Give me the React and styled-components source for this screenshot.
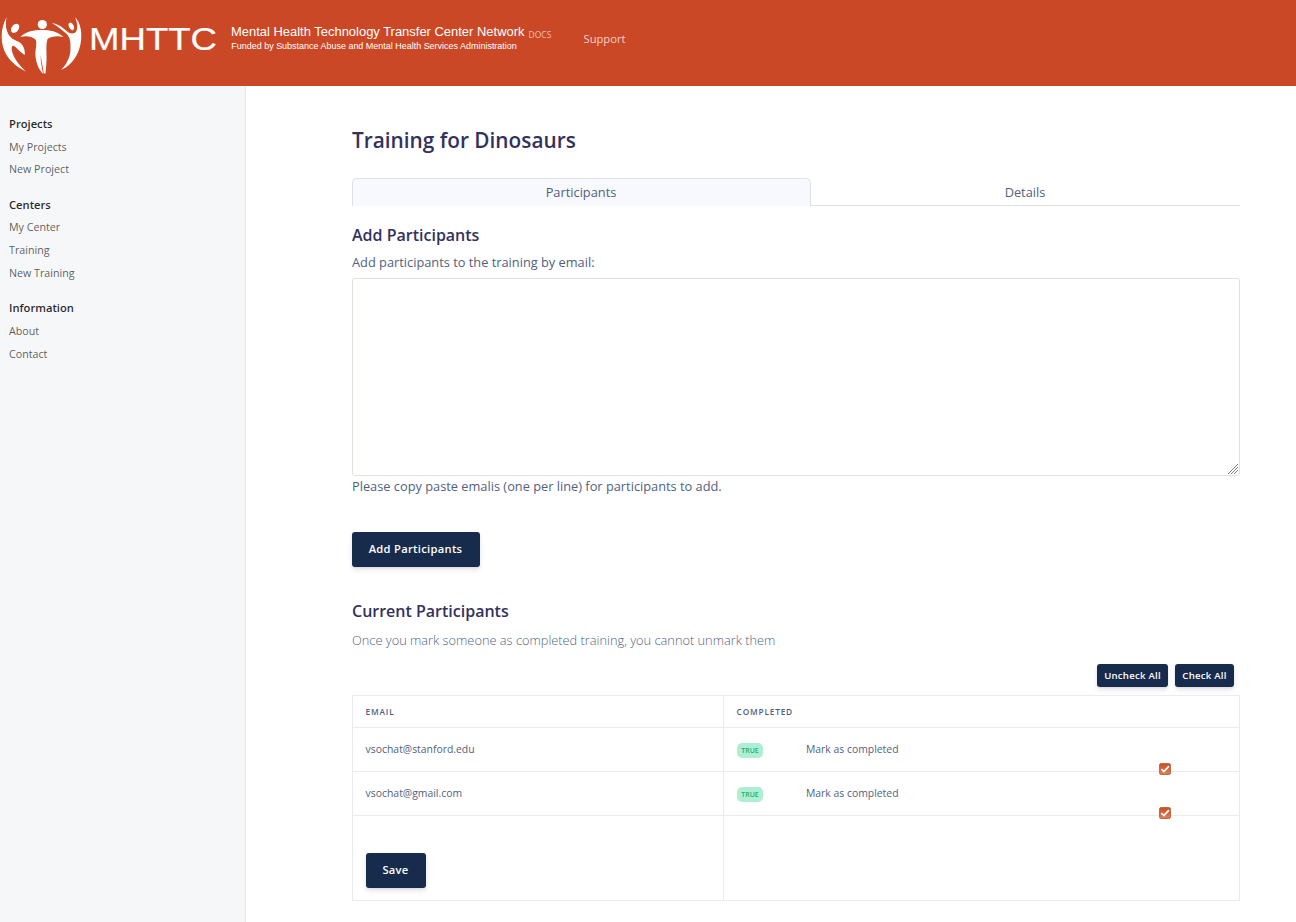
import React from "react";
import styled, { createGlobalStyle } from "styled-components";

const GlobalStyle = createGlobalStyle`
  *, *::before, *::after { box-sizing: border-box; }
  html, body { margin: 0; background: #fff; overflow: hidden; }
  body {
    font-family: "Open Sans", sans-serif;
    font-size: 12.8px;
    line-height: 1.5;
    color: #525f7f;
  }
`;

const Page = styled.div`
  height: 922px;
  display: flex;
  flex-direction: column;
`;

const Header = styled.header`
  height: 86px;
  flex: none;
  display: flex;
  background: #cb4827;
`;

const Logo = styled.svg`
  display: block;
  flex: none;
`;

const LogoText = styled.text`
  font-family: "Liberation Sans", Arial, sans-serif;
  fill: #fff;
`;

const DocsTag = styled.span`
  margin: 28.5px 0 0 2.5px;
  width: 55px;
  font-size: 8.5px;
  line-height: 12px;
  color: rgba(255, 255, 255, 0.65);
`;

const NavLink = styled.a`
  margin-top: 30px;
  font-size: 11.2px;
  line-height: 18px;
  color: rgba(255, 255, 255, 0.75);
`;

const Body = styled.div`
  flex: 1;
  display: flex;
  min-height: 0;
`;

const Sidebar = styled.nav`
  width: 246px;
  flex: none;
  padding: 27px 9px 0;
  background: #f5f7f9;
  border-right: 1px solid #e6e8ed;
`;

const NavGroup = styled.div`
  margin-bottom: 12.4px;
`;

const NavHeading = styled.div`
  height: 22.5px;
  font-size: 11.2px;
  line-height: 22px;
  font-weight: 600;
  color: rgba(0, 0, 0, 0.85);
`;

const NavItem = styled.a`
  display: block;
  height: 22.9px;
  font-size: 10.7px;
  line-height: 22.9px;
  color: rgba(0, 0, 0, 0.65);
`;

const Main = styled.main`
  width: 888px;
  margin-left: 106px;
  padding-top: 38px;
`;

const Title = styled.h1`
  margin: 0;
  height: 54px;
  font-size: 20.8px;
  line-height: 32px;
  font-weight: 600;
  color: #32325d;
`;

const Tabs = styled.div`
  display: flex;
  height: 28px;
`;

const Tab = styled.div`
  width: ${(p) => (p.$active ? "459px" : "429px")};
  padding-right: 1px;
  text-align: center;
  line-height: 26px;
  border: 1px solid ${(p) => (p.$active ? "#dee2e6" : "transparent")};
  border-bottom-color: ${(p) => (p.$active ? "#f7f9ff" : "#dee2e6")};
  border-bottom-width: ${(p) => (p.$active ? 0 : "1px")};
  border-left-width: ${(p) => (p.$active ? "1px" : 0)};
  border-right-width: ${(p) => (p.$active ? "1px" : 0)};
  border-radius: ${(p) => (p.$active ? "5px 5px 0 0" : 0)};
  background: ${(p) => (p.$active ? "#f7f9ff" : "#fff")};
`;

const SectionTitle = styled.h2`
  margin: ${(p) => p.$top}px 0 0;
  font-size: 16px;
  line-height: 24px;
  font-weight: 600;
  color: #32325d;
`;

const Label = styled.label`
  display: block;
  margin: 5px 0 6px;
  line-height: 20px;
`;

const AreaWrap = styled.div`
  position: relative;
`;

const EmailArea = styled.textarea`
  display: block;
  width: 100%;
  height: 198px;
  padding: 8px 10px;
  border: 1px solid #dee2e6;
  border-radius: 3px;
  background: #fff;
  font: inherit;
  color: inherit;
  outline: none;
  resize: none;
`;

const Grip = styled.svg`
  position: absolute;
  right: 2px;
  bottom: 2px;
`;

const Help = styled.div`
  height: 20px;
  line-height: 20px;
`;

const Button = styled.button`
  display: block;
  width: ${(p) => p.$width}px;
  height: ${(p) => (p.$small ? 23 : 35)}px;
  margin: ${(p) => p.$top || 0}px 0 0;
  padding: 0 ${(p) => (p.$small ? 0 : 1)}px ${(p) => (p.$small ? 0 : 2)}px 0;
  border: 0;
  border-radius: 3px;
  background: #172b4d;
  color: #fff;
  font-family: inherit;
  font-size: ${(p) => (p.$small ? "9.6px" : "11.2px")};
  font-weight: 600;
  letter-spacing: ${(p) => (p.$small ? "0.24px" : "0.29px")};
  text-align: center;
  white-space: nowrap;
  box-shadow: 0 3px 5px rgba(50, 50, 93, 0.11), 0 1px 2px rgba(0, 0, 0, 0.08);
`;

const Note = styled.p`
  margin: 6px 0 0;
  height: 22px;
  font-size: 12.8px;
  line-height: 22px;
  font-weight: 300;
`;

const Actions = styled.div`
  display: flex;
  justify-content: flex-end;
  gap: 7px;
  margin: 13px 6px 8px 0;
`;

const Table = styled.div`
  border: 1px solid #e9ecef;
  border-bottom: 0;
`;

const Row = styled.div`
  display: grid;
  grid-template-columns: 370px 1fr;
  height: ${(p) => p.$height}px;
  border-bottom: 1px solid #e9ecef;
`;

const Cell = styled.div`
  position: relative;
  display: flex;
  align-items: ${(p) => (p.$start ? "flex-start" : "center")};
  padding-left: 13px;
  border-left: ${(p) => (p.$divided ? "1px solid #e9ecef" : "0")};
`;

const ColumnName = styled.span`
  margin-left: -0.4px;
  font-size: 8.32px;
  line-height: 12px;
  font-weight: 600;
  letter-spacing: 0.8px;
  text-transform: uppercase;
`;

const Value = styled.span`
  margin-left: -0.4px;
  padding-bottom: 1px;
  font-size: 10.4px;
  line-height: 18px;
`;

const Badge = styled.span`
  width: 26px;
  height: 15px;
  margin: 2px 43.4px 0 0;
  border-radius: 5px;
  background: #b0eed3;
  color: #1aae6f;
  font-size: 6.9px;
  line-height: 15px;
  font-weight: 600;
  text-align: center;
`;

const Check = styled.svg`
  position: absolute;
  left: 435px;
  bottom: -4px;
  z-index: 1;
`;

const groups = [
  { heading: "Projects", links: ["My Projects", "New Project"] },
  { heading: "Centers", links: ["My Center", "Training", "New Training"] },
  { heading: "Information", links: ["About", "Contact"] },
];

const participants = ["vsochat@stanford.edu", "vsochat@gmail.com"];

function MhttcLogo() {
  return (
    <Logo width="526" height="86" viewBox="0 0 526 86">
      <g fill="#fff">
        <path d="M6.7 17 C-.2 29 .2 45 6.5 55 C11 62 17 67 25.8 71.5 C19 65 13.5 58 12 51 C11 46 12.5 44 16 47.5 C18.5 50 21.5 53 24.7 55 C25.5 49 22.5 43.5 18 41.5 C13 39.5 9 37 7 31 C5.5 27 5.5 22 6.7 17Z" />
        <ellipse cx="15.1" cy="28.3" rx="3.5" ry="5.1" transform="rotate(38 15.1 28.3)" />
        <circle cx="42.3" cy="24.5" r="4.6" />
        <path d="M20.3 37 C26 31 34 30 42 30 C50 30 57 31 63.5 37 C57 35.5 51 36.5 47.5 39 C45.5 45 47 54 46.5 61 C46.3 66 45.8 69 45.5 73.5 L43.8 73.5 C43 67 41.5 62 40.7 55 C40.4 62 42 67 43 74 C38.5 69 36 63 35.4 55 C35.2 49 37.5 43 35.5 39.5 C31 35.5 25 36 20.3 37Z" />
        <ellipse cx="71.3" cy="26.3" rx="2.3" ry="4" transform="rotate(-25 71.3 26.3)" />
        <path d="M51.8 23 C58 24 62 27 66 30.5 C69 33.5 73 34.5 75.8 32 C78.2 29 77.5 22 74.8 17 C81 23 82.5 34 80.5 44 C78.5 55 72 65 61 70 C66 65 69.8 58 70.4 51 C70.8 44 70.5 38 67 34.3 C63 31 57.5 26 51.8 23Z" />
      </g>
      <LogoText x="89" y="49.8" fontSize="31.8" textLength="128" lengthAdjust="spacingAndGlyphs" stroke="#fff" strokeWidth="0.2">
        MHTTC
      </LogoText>
      <LogoText x="231" y="36.2" fontSize="12.6" textLength="293.5" lengthAdjust="spacingAndGlyphs">
        Mental Health Technology Transfer Center Network
      </LogoText>
      <LogoText x="231.3" y="48.9" fontSize="8.8" textLength="285.5" lengthAdjust="spacingAndGlyphs">
        Funded by Substance Abuse and Mental Health Services Administration
      </LogoText>
    </Logo>
  );
}

function CheckMark() {
  return (
    <Check width="12" height="12" viewBox="0 0 13 13" role="img" aria-label="checked">
      <defs>
        <linearGradient id="boxFill" x1="0" y1="0" x2="0" y2="1">
          <stop offset="0" stopColor="#cc4d20" />
          <stop offset="1" stopColor="#e17e54" />
        </linearGradient>
      </defs>
      <rect x="0.5" y="0.5" width="12" height="12" rx="2" fill="url(#boxFill)" stroke="#b9603b" />
      <path d="M2.6 6.6 L5.3 9.3 L10.8 3.4" fill="none" stroke="#fff" strokeWidth="1.9" />
    </Check>
  );
}

export default function App() {
  return (
    <Page>
      <GlobalStyle />
      <Header>
        <MhttcLogo />
        <DocsTag>DOCS</DocsTag>
        <NavLink>Support</NavLink>
      </Header>
      <Body>
        <Sidebar>
          {groups.map((g) => (
            <NavGroup key={g.heading}>
              <NavHeading>{g.heading}</NavHeading>
              {g.links.map((l) => (
                <NavItem key={l}>{l}</NavItem>
              ))}
            </NavGroup>
          ))}
        </Sidebar>
        <Main>
          <Title>Training for Dinosaurs</Title>
          <Tabs>
            <Tab $active>Participants</Tab>
            <Tab>Details</Tab>
          </Tabs>
          <SectionTitle $top={17}>Add Participants</SectionTitle>
          <Label htmlFor="emails">Add participants to the training by email:</Label>
          <AreaWrap>
            <EmailArea id="emails" />
            <Grip width="10" height="10" viewBox="0 0 10 10" stroke="#808080" strokeWidth="1" fill="none">
              <path d="M0 10 L10 0 M3 10 L10 3 M6 10 L10 6" />
            </Grip>
          </AreaWrap>
          <Help>Please copy paste emalis (one per line) for participants to add.</Help>
          <Button $width={128} $top={36}>Add Participants</Button>
          <SectionTitle $top={32}>Current Participants</SectionTitle>
          <Note>Once you mark someone as completed training, you cannot unmark them</Note>
          <Actions>
            <Button $small $width={71}>Uncheck All</Button>
            <Button $small $width={59}>Check All</Button>
          </Actions>
          <Table>
            <Row $height={32}>
              <Cell><ColumnName>Email</ColumnName></Cell>
              <Cell $divided><ColumnName>Completed</ColumnName></Cell>
            </Row>
            {participants.map((email) => (
              <Row key={email} $height={44}>
                <Cell><Value>{email}</Value></Cell>
                <Cell $divided>
                  <Badge>TRUE</Badge>
                  <Value>Mark as completed</Value>
                  <CheckMark />
                </Cell>
              </Row>
            ))}
            <Row $height={85}>
              <Cell $start><Button $width={60} $top={37}>Save</Button></Cell>
              <Cell $divided />
            </Row>
          </Table>
        </Main>
      </Body>
    </Page>
  );
}
